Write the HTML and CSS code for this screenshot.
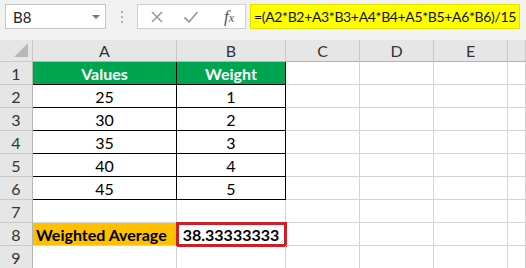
FILE: index.html
```html
<!DOCTYPE html>
<html lang="en">
<head>
  <meta charset="UTF-8">
  <title>Weighted Average</title>
  <link rel="stylesheet" href="styles.css">
</head>
<body>
  <div class="formula-bar">
    <div class="name-box">
      <span>B8</span>
      <span class="caret"></span>
    </div>
    <div class="grip"><i></i><i></i><i></i></div>
    <div class="fx-buttons">
      <svg width="14" height="14" viewBox="0 0 14 14"><path d="M2 2 L12 12 M12 2 L2 12" stroke="#9a9a9a" stroke-width="1.6" fill="none"/></svg>
      <svg width="16" height="14" viewBox="0 0 16 14"><path d="M1.5 7.5 L6 12 L14.5 2" stroke="#9a9a9a" stroke-width="1.8" fill="none"/></svg>
      <span class="fx">f<span class="x">x</span></span>
    </div>
    <div class="formula">=(A2*B2+A3*B3+A4*B4+A5*B5+A6*B6)/15</div>
  </div>

  <div class="sheet">
    <div class="corner"></div>
    <div class="col-head">A</div>
    <div class="col-head">B</div>
    <div class="col-head">C</div>
    <div class="col-head">D</div>
    <div class="col-head">E</div>
    <div class="col-head"></div>

    <div class="row-head">1</div>
    <div class="cell th">Values</div>
    <div class="cell th">Weight</div>
    <div class="cell"></div><div class="cell"></div><div class="cell"></div><div class="cell"></div>

    <div class="row-head">2</div>
    <div class="cell tb">25</div>
    <div class="cell tb">1</div>
    <div class="cell"></div><div class="cell"></div><div class="cell"></div><div class="cell"></div>

    <div class="row-head">3</div>
    <div class="cell tb">30</div>
    <div class="cell tb">2</div>
    <div class="cell"></div><div class="cell"></div><div class="cell"></div><div class="cell"></div>

    <div class="row-head">4</div>
    <div class="cell tb">35</div>
    <div class="cell tb">3</div>
    <div class="cell"></div><div class="cell"></div><div class="cell"></div><div class="cell"></div>

    <div class="row-head">5</div>
    <div class="cell tb">40</div>
    <div class="cell tb">4</div>
    <div class="cell"></div><div class="cell"></div><div class="cell"></div><div class="cell"></div>

    <div class="row-head">6</div>
    <div class="cell tb">45</div>
    <div class="cell tb">5</div>
    <div class="cell"></div><div class="cell"></div><div class="cell"></div><div class="cell"></div>

    <div class="row-head">7</div>
    <div class="cell"></div>
    <div class="cell"></div>
    <div class="cell"></div><div class="cell"></div><div class="cell"></div><div class="cell"></div>

    <div class="row-head">8</div>
    <div class="cell label">Weighted Average</div>
    <div class="cell result">38.33333333</div>
    <div class="cell"></div><div class="cell"></div><div class="cell"></div><div class="cell"></div>

    <div class="row-head">9</div>
    <div class="cell"></div>
    <div class="cell"></div>
    <div class="cell"></div><div class="cell"></div><div class="cell"></div><div class="cell"></div>
  </div>
</body>
</html>
```

FILE: styles.css
```css
* {
  box-sizing: border-box;
}
body {
  margin: 0;
  width: 526px;
  height: 268px;
  overflow: hidden;
  background: #fff;
  font-family: Lato, "Liberation Sans", sans-serif;
  color: #000;
}
.formula-bar {
  display: flex;
  align-items: flex-start;
  height: 40px;
  padding: 4px 0 0 5px;
  background: #f1f1f1;
}
.name-box {
  display: flex;
  align-items: center;
  justify-content: space-between;
  width: 101px;
  height: 25px;
  padding: 0 5px 0 7px;
  background: #fff;
  border: 1px solid #c6c6c6;
  font-size: 15px;
  color: #222;
}
.caret {
  width: 0;
  height: 0;
  border-left: 4px solid transparent;
  border-right: 4px solid transparent;
  border-top: 4px solid #777;
}
.grip {
  display: flex;
  flex-direction: column;
  gap: 3px;
  width: 31px;
  padding: 7px 0 0 15px;
}
.grip i {
  width: 2px;
  height: 2px;
  background: #b0b0b0;
}
.fx-buttons {
  display: flex;
  align-items: center;
  gap: 19px;
  width: 109px;
  height: 25px;
  padding: 0 0 0 12px;
  background: #fff;
  border: 1px solid #d0d0d0;
}
.fx {
  margin-left: 6px;
  font-family: "Liberation Serif", serif;
  font-style: italic;
  font-size: 17px;
  color: #555;
}
.fx .x {
  font-size: 12px;
}
.formula {
  width: 270px;
  height: 25px;
  margin-left: 4px;
  padding: 3px 0 0 3px;
  background: #ffff00;
  border: 1px solid #e2e200;
  font-size: 14px;
  letter-spacing: -0.35px;
  white-space: nowrap;
  color: #111;
}
.sheet {
  display: grid;
  grid-template-columns: 33px 144px 109px 74px 74px 74px 18px;
  grid-template-rows: 22px repeat(9, 23px);
}
.corner {
  position: relative;
  background: #e6e6e6;
  border-right: 1px solid #c8c8c8;
  border-bottom: 1px solid #c8c8c8;
}
.corner::after {
  content: "";
  position: absolute;
  right: 4px;
  bottom: 4px;
  border-left: 14px solid transparent;
  border-bottom: 14px solid #b9b9b9;
}
.col-head {
  display: flex;
  align-items: center;
  justify-content: center;
  background: #e6e6e6;
  border-right: 1px solid #c8c8c8;
  border-bottom: 1px solid #b5b5b5;
  font-size: 16px;
  color: #333;
}
.row-head {
  display: flex;
  align-items: center;
  justify-content: center;
  background: #e6e6e6;
  border-right: 1px solid #b5b5b5;
  border-bottom: 1px solid #c8c8c8;
  font-size: 16px;
  color: #333;
}
.cell {
  display: flex;
  align-items: center;
  justify-content: center;
  border-right: 1px solid #d4d4d4;
  border-bottom: 1px solid #d4d4d4;
  font-size: 16px;
  white-space: nowrap;
}
.th {
  background: #00a550;
  color: #fff;
  font-weight: bold;
  border-right: 1px solid #000;
  border-bottom: 1px solid #000;
}
.tb {
  border-right: 1px solid #000;
  border-bottom: 1px solid #000;
}
.label {
  justify-content: flex-start;
  padding-left: 3px;
  background: #ffc000;
  font-weight: bold;
  border-right: 1px solid #000;
}
.result {
  font-weight: bold;
  outline: 3px solid #cc1f26;
  outline-offset: -2px;
}
```
